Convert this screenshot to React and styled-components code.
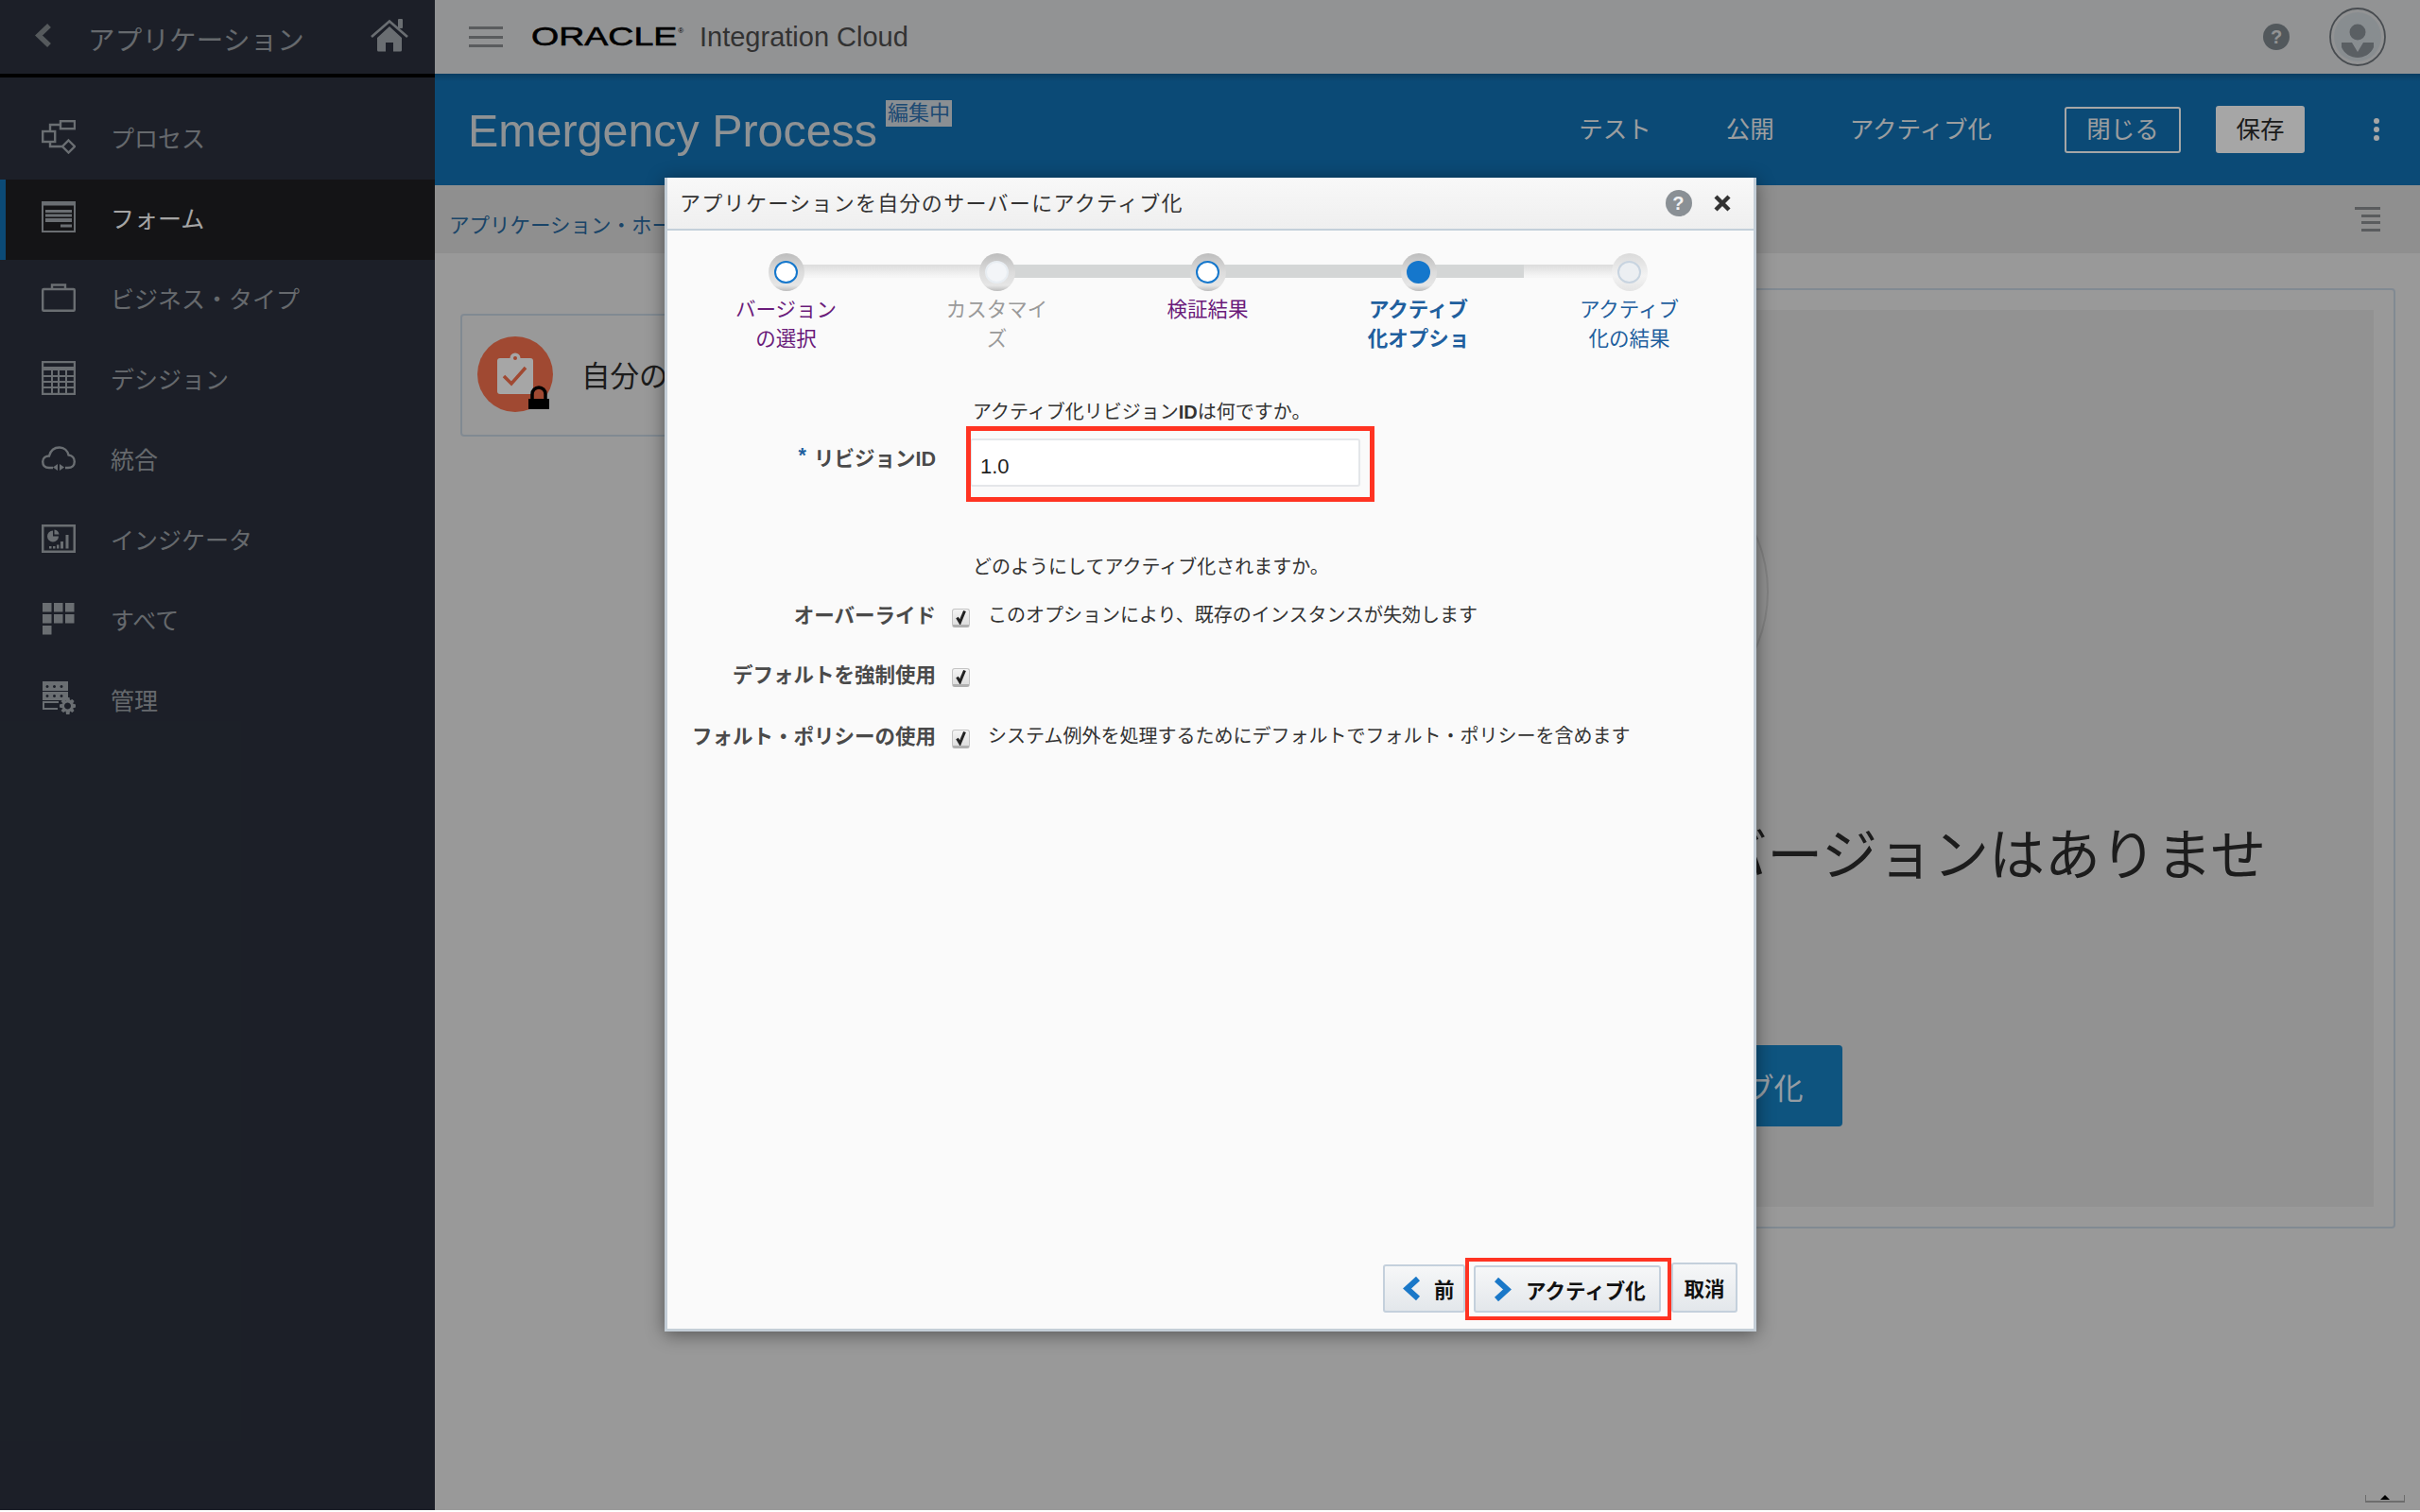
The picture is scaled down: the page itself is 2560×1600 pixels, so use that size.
import React from "react";
import styled, { createGlobalStyle } from "styled-components";

const Global = createGlobalStyle`
  html, body { margin: 0; padding: 0; background: #fff; }
  body { font-family: "Liberation Sans", "Noto Sans CJK JP", sans-serif; }
  * { box-sizing: border-box; }
`;

const Page = styled.div`
  position: relative; width: 2560px; height: 1598px; overflow: hidden;
  display: grid; grid-template-columns: 460px 1fr;
`;
const Scrim = styled.div`position: absolute; inset: 0; background: rgba(0,0,0,.35);`;

/* sidebar */
const Sidebar = styled.aside`background: #2b313e; display: flex; flex-direction: column;`;
const SideHead = styled.div`
  height: 82px; border-bottom: 4px solid #000; display: flex; align-items: center;
  padding: 0 28px 4px 37px; color: #9da2a8; font-size: 28.5px; letter-spacing: .2px;
`;
const SideTitle = styled.span`margin-left: 38px; flex: 1; padding-top: 6px;`;
const SideNav = styled.nav`padding-top: 23px; display: flex; flex-direction: column;`;
const SideItem = styled.a`
  height: 85px; display: flex; align-items: center; gap: 37px; padding: 0 0 6px 44px;
  font-size: 25px; color: ${p => (p.$active ? "#fefefe" : "#9da2a8")};
  background: ${p => (p.$active ? "#1f2022" : "transparent")};
  box-shadow: ${p => (p.$active ? "inset 6px 0 0 #1272b6" : "none")};
  svg { flex: none; color: #a3a9b0; }
`;

/* right column */
const Right = styled.div`display: flex; flex-direction: column; min-width: 0;`;
const TopBar = styled.header`
  height: 78px; background: #e1e2e4; display: flex; align-items: center; padding: 0 36px;
`;
const Hamburger = styled.div`
  width: 36px; height: 22px; display: flex; flex-direction: column; justify-content: space-between;
  i { display: block; height: 3px; background: #8a8e91; }
`;
const Logo = styled.div`
  width: 159px; margin-left: 30px; display: flex; align-items: flex-start; color: #000;
  font-size: 28px; font-weight: 400; line-height: 28px; height: 28px; white-space: nowrap;
  span { display: inline-block; transform: scaleX(1.34); transform-origin: left center; -webkit-text-stroke: .6px #000; }
  sup { font-size: 8px; line-height: 8px; margin-left: 40px; margin-top: 4px; }
`;
const Product = styled.div`font-size: 29px; color: #4e4e4e; margin-left: 19px;`;
const TopRight = styled.div`margin-left: auto; display: flex; align-items: center; gap: 42px; margin-right: 0;`;
const HelpDot = styled.span`
  width: 28px; height: 28px; border-radius: 50%; display: flex; align-items: center; justify-content: center;
  background: ${p => p.$bg}; color: ${p => p.$fg}; font-size: 20px; font-weight: 700; flex: none;
`;

const Band = styled.div`
  height: 118px; background: linear-gradient(#0f5e96 0, #1272b6 8px); display: flex; align-items: center;
  padding: 0 43px 0 35px; position: relative;
`;
const AppName = styled.h1`
  margin: 2px 0 0; font-size: 48.4px; line-height: 60px; font-weight: 400; color: #dce1e4; white-space: nowrap;
`;
const Badge = styled.span`
  align-self: flex-start; margin: 28px 0 0 9px; width: 70px; height: 28px; background: #d4dce2; color: #2e72b1;
  font-size: 22px; line-height: 28px; text-align: center; white-space: nowrap;
`;
const BandNav = styled.div`margin-left: auto; display: flex; align-items: center; font-size: 25.5px; color: #f0f3f5;`;
const BandLink = styled.a`margin-right: ${p => p.$mr}px; white-space: nowrap; padding-bottom: 5px;`;
const OutlineBtn = styled.button`
  width: 123px; height: 49px; padding: 0 0 5px; border: 2px solid #fff; border-radius: 3px; background: transparent;
  color: #f0f3f5; font: inherit; margin-right: 37px;
`;
const SaveBtn = styled.button`
  width: 94px; height: 50px; padding: 0 0 5px; border: 0; border-radius: 3px; background: #fff; color: #2b2b2b; font: inherit;
`;
const Dots = styled.div`
  margin-left: 73px; display: flex; flex-direction: column; gap: 3px;
  i { width: 6px; height: 6px; border-radius: 50%; background: #fff; display: block; }
`;

const Crumbs = styled.div`
  height: 72px; background: #dcdcdc; display: flex; align-items: center; padding: 0 42px 0 15px;
  justify-content: space-between; font-size: 21.5px; color: #2869a0;
`;
const CrumbText = styled.span`padding-top: 9px;`;
const ListIcon = styled.div`
  width: 27px; display: flex; flex-direction: column; align-items: flex-end; gap: 4.5px;
  i { height: 3px; width: 20px; background: #8a8e91; display: block; }
  i:first-child { width: 27px; }
`;

const Main = styled.main`
  flex: 1; background: #ebebeb; padding: 37px 26px 0 27px; display: grid; grid-template-columns: 400px 1fr; gap: 26px;
  position: relative; align-items: start;
`;
const Card = styled.section`
  margin-top: 27px; height: 130px; border: 2px solid #c7d4e1; border-radius: 4px;
  display: flex; align-items: center; padding-left: 16px; gap: 30px; position: relative;
  font-size: 30.5px; color: #2b2b2b; white-space: nowrap; overflow: hidden;
`;
const CardTitle = styled.span`padding-bottom: 3px;`;
const Panel = styled.section`
  height: 995px; border: 2px solid #c7d4e1; border-radius: 4px; padding: 21px;
`;
const PanelInner = styled.div`
  height: 100%; background: #e1e1e1; display: flex; flex-direction: column; align-items: center; padding-top: 148px;
`;
const Ring = styled.div`width: 300px; height: 300px; border-radius: 50%; border: 2px solid #c9c9c9; flex: none; margin-right: 6px;`;
const Empty = styled.p`
  width: 1365px; margin: 95px 0 0; font-size: 59px; line-height: 70px; text-align: center; color: #2b2b2b;
`;
const ActivateBig = styled.button`
  margin-top: 95px; width: 450px; height: 86px; border: 0; border-radius: 4px; background: #1681c4; color: #e6f2fb;
  font: inherit; font-size: 31px; flex: none; white-space: nowrap; padding: 0;
`;
const BottomTab = styled.div`
  position: absolute; right: 16px; bottom: 8px; width: 42px; height: 8px; border: 1px solid #a8a8a8; border-top: 0;
  border-bottom-width: 2px; display: flex; justify-content: center;
  &::after { content: ""; width: 0; height: 0; border: 5px solid transparent; border-bottom: 5px solid #000; border-top: 0; margin-top: 0; }
`;

/* dialog */
const Dialog = styled.div`
  position: absolute; left: 703px; top: 188px; width: 1155px; height: 1221px; background: #fafafa;
  border: solid #c4ced7; border-width: 0 3px 3px 3px; box-shadow: 0 3px 18px rgba(0,0,0,.45);
  display: flex; flex-direction: column;
`;
const DialogHead = styled.div`
  height: 56px; flex: none; border-bottom: 2px solid #c4d0da; background: linear-gradient(#f8f8f8, #efefef);
  display: flex; align-items: center; padding: 0 23px 0 13px; font-size: 22px; letter-spacing: 1.3px; color: #333;
`;
const DialogTitle = styled.span`flex: 1; white-space: nowrap; padding-bottom: 5px;`;
const Close = styled.span`margin-left: 22px; display: flex;`;

const Train = styled.div`
  position: relative; display: grid; grid-template-columns: repeat(5, 223px); padding: 24px 0 0 14px; flex: none;
`;
const Track = styled.div`
  position: absolute; left: 125px; top: 36px; width: 894px; height: 14px; display: flex;
`;
const TrackPart = styled.i`
  display: block; flex: ${p => p.$grow} 0 0;
  background: ${p => (p.$dark ? "#d4d6d6" : "linear-gradient(#dcdcdc, #f6f6f6 90%)")};
`;
const Step = styled.div`position: relative; display: flex; flex-direction: column; align-items: center;`;
const Node = styled.div`
  width: 38px; height: 40px; border-radius: 50%; display: flex; align-items: center; justify-content: center;
  background: ${p => (p.$faded ? "linear-gradient(#dadada,#f3f3f3 60%,#e4e4e4)" : "linear-gradient(#bdbdbd,#dcdcdc 50%,#e6e6e6 85%,#bcbcbc)")};
`;
const Dot = styled.div`
  width: 25px; height: 24px; border-radius: 50%; border: 2px solid ${p => p.$line}; background: ${p => p.$fill};
`;
const StepLabel = styled.div`
  margin-top: 5px; width: 112px; height: 62px; overflow: hidden; text-align: center; line-break: anywhere; word-break: break-all;
  font-size: 21.5px; line-height: 30.5px; color: ${p => p.$color}; font-weight: ${p => (p.$bold ? 700 : 400)};
`;

const Form = styled.div`
  flex: 1; display: flex; flex-direction: column; padding-top: 45px;
`;
const Row = styled.div`
  display: grid; grid-template-columns: 284px 1fr; column-gap: 17px; align-items: center; margin-top: ${p => p.$mt || 0}px;
  min-height: 28px;
`;
const Label = styled.label`
  grid-column: 1; text-align: right; font-size: 21.5px; font-weight: 700; color: #4a4a4a; white-space: nowrap;
  position: relative; top: ${p => p.$shift || 0}px;
`;
const Star = styled.span`color: #1f5f9e; margin-right: 8px; position: relative; top: -4px;`;
const Prompt = styled.div`
  grid-column: 2; padding-left: 22px; font-size: 20px; color: #333; white-space: nowrap;
  b { font-weight: 700; }
`;
const Field = styled.div`position: relative; grid-column: 2; margin-left: 19px; width: 413px;`;
const Input = styled.input`
  display: block; width: 100%; height: 51px; border: 2px solid #e4e6e9; border-radius: 3px; background: #fff;
  font: 22px "Liberation Sans", sans-serif; color: #222; padding: 8px 9px 0; outline: 0;
`;
const RedMark = styled.div`
  position: absolute; top: -13px; left: -4px; right: -15px; bottom: -16px; border: 5px solid #ff3322; pointer-events: none;
`;
const Controls = styled.div`grid-column: 2; display: flex; align-items: center; gap: 19px;`;
const Check = styled.span`
  width: 19px; height: 20px; border: 1px solid #c4c4c4; border-bottom: 3px solid #b0b0b0; border-radius: 3px;
  background: linear-gradient(#f4f4f4, #dedede); display: flex; align-items: center; justify-content: center; flex: none;
  position: relative; top: 4px;
`;
const Desc = styled.span`font-size: 20px; color: #333; white-space: nowrap;`;

const Footer = styled.div`
  flex: none; display: flex; justify-content: flex-end; align-items: flex-end; padding: 0 17px 17px 0; height: 80px; font-size: 21.5px;
`;
const FootBtn = styled.button`
  height: ${p => p.$h || 51}px; width: ${p => p.$w}px; flex: none; border: 2px solid #c4d0dc; border-radius: 3px;
  background: linear-gradient(#f6f7f8, #e3e7eb); font: inherit; font-weight: 700; color: #111; padding: 0;
  display: flex; align-items: center; justify-content: ${p => (p.$center ? "center" : "flex-start")};
  padding-left: ${p => p.$pl || 0}px; white-space: nowrap;
  svg { flex: none; margin-right: ${p => p.$gap || 0}px; }
`;
const RedWrap = styled.div`
  flex: none; width: 218px; height: 66px; border: 4px solid #ff3322; background: #fbfbfb; padding: 4px 0 0 5px; margin-bottom: -8px; position: relative;
`;

const Chevron = ({ dir }) => (
  <svg width="19" height="25" viewBox="0 0 19 25">
    <path d={dir === "l" ? "M16 2 L4.5 12.5 L16 23" : "M3 2 L14.5 12.5 L3 23"} fill="none" stroke="#1a78c8" strokeWidth="6" />
  </svg>
);

const ProcessIcon = () => (
  <svg width="36" height="36" viewBox="0 0 36 36" fill="none" stroke="currentColor" strokeWidth="2.4">
    <rect x="20" y="1.2" width="15" height="8" />
    <rect x="1.2" y="12" width="13" height="11" />
    <path d="M20 5 H9 V12 M9 23 V28 H22" />
    <path d="M28.5 21.5 L35 28 L28.5 34.5 L22 28 Z" />
  </svg>
);
const FormIcon = () => (
  <svg width="36" height="33" viewBox="0 0 36 33" fill="currentColor">
    <path fillRule="evenodd" d="M0 0H36V33H0Z M2 4.5V31H34V4.5Z" />
    <rect x="4" y="9" width="28" height="3" /><rect x="4" y="13.5" width="28" height="3" />
    <rect x="4" y="18" width="28" height="4" /><rect x="20" y="24.5" width="12" height="3" />
  </svg>
);
const CaseIcon = () => (
  <svg width="36" height="30" viewBox="0 0 36 30" fill="none" stroke="currentColor" strokeWidth="2.4">
    <rect x="1.2" y="6" width="33.6" height="22.8" rx="1" /><path d="M11 6 V1.5 H25 V6" />
  </svg>
);
const GridIcon = () => (
  <svg width="36" height="36" viewBox="0 0 36 36" fill="none" stroke="currentColor" strokeWidth="2">
    <rect x="1" y="1" width="34" height="34" strokeWidth="2.4" />
    <path d="M1 8H35" strokeWidth="4" /><path d="M1 16H35M1 22H35M1 28H35M11 8V35M18 8V35M26 8V35" />
  </svg>
);
const CloudIcon = () => (
  <svg width="36" height="26" viewBox="0 0 36 26" fill="none" stroke="currentColor" strokeWidth="2.4">
    <path d="M12 23 H8 C3 23 1.2 20 1.2 16.5 C1.2 12.5 4.5 10.5 8 10.5 C9.5 4.5 14 1.5 19 1.5 C24 1.5 27.5 5 28.5 9.5 C32.5 10 34.8 13 34.8 16.5 C34.8 20.5 32 23 28 23 H25" />
    <path d="M17 19V26L12 22.5Z M19 19V26L24 22.5Z" fill="currentColor" stroke="none" />
  </svg>
);
const GaugeIcon = () => (
  <svg width="36" height="30" viewBox="0 0 36 30" fill="currentColor">
    <path fillRule="evenodd" d="M0 0H36V30H0Z M2.5 2.5V27.5H33.5V2.5Z" />
    <path d="M12 6.5 A6 6 0 1 0 18 12.5 H12Z" /><path d="M13.5 5.5 A6 6 0 0 1 18.5 10.5 H13.5Z" />
    <rect x="8" y="23" width="2.5" height="2.5" /><rect x="12" y="23" width="2.5" height="2.5" />
    <rect x="16" y="21.5" width="2.5" height="4" /><rect x="20" y="18" width="3" height="7.5" /><rect x="25.5" y="11" width="3" height="14.5" />
  </svg>
);
const AllIcon = () => (
  <svg width="36" height="34" viewBox="0 0 36 34" fill="currentColor">
    {[[1,0],[13,0],[25,0],[1,12],[13,12],[25,12],[1,24]].map(([x, y]) => <rect key={`${x}-${y}`} x={x} y={y} width="9.5" height="9.5" />)}
  </svg>
);
const AdminIcon = () => (
  <svg width="36" height="37" viewBox="0 0 36 37" fill="currentColor">
    <path fillRule="evenodd" d="M1 0H28V10H1Z M6 4a1.5 1.5 0 1 0 .01 0Z M13.5 4a1.5 1.5 0 1 0 .01 0Z M21 4a1.5 1.5 0 1 0 .01 0Z" />
    <path fillRule="evenodd" d="M1 11H28V20H1Z M6 14a1.5 1.5 0 1 0 .01 0Z M13.5 14a1.5 1.5 0 1 0 .01 0Z M21 14a1.5 1.5 0 1 0 .01 0Z" />
    <path d="M1 21H18V23H3V28H17V30H1Z" />
    <path fillRule="evenodd" d="M27 17L29.5 17L30 20L32.5 19L34.5 21L33 23.5L36 24.5V27.5L33 28.5L34.5 31L32.5 33L30 31.5L29.5 35H26L25.5 31.5L23 33L20.5 31L22.5 28.5L19 27.5V24.5L22.5 23.5L20.5 21L23 19L25.5 20.5Z M27.5 22.5a3.5 3.5 0 1 0 .01 0Z" />
  </svg>
);
const HomeIcon = () => (
  <svg width="40" height="35" viewBox="0 0 40 35" fill="none">
    <path d="M7 20 L20 8 L33 20 V33 a1.5 1.5 0 0 1-1.5 1.5 H24 V25 H16 V34.5 H8.5 A1.5 1.5 0 0 1 7 33Z" fill="#a3a9b0" />
    <path d="M1 19 L20 2.5 L39 19" stroke="#a3a9b0" strokeWidth="2.6" />
    <rect x="29" y="0" width="5" height="10" rx="1" fill="#a3a9b0" />
  </svg>
);
const BackIcon = () => (
  <svg width="18" height="25" viewBox="0 0 18 25"><path d="M15 2 L4 12.5 L15 23" fill="none" stroke="#83898e" strokeWidth="5.5" /></svg>
);
const Avatar = () => (
  <svg width="60" height="62" viewBox="0 0 60 62">
    <ellipse cx="30" cy="31" rx="29" ry="30" fill="none" stroke="#6f767c" strokeWidth="1.8" />
    <ellipse cx="30" cy="31" rx="25" ry="26" fill="#d2d9de" />
    <circle cx="30" cy="26" r="8.5" fill="#8b9299" />
    <path d="M13 37 H24 L30 47 L36 37 H47 V42 C44 49 37 53 30 53 C23 53 16 49 13 42Z" fill="#8b9299" />
  </svg>
);
const TaskBadge = () => (
  <svg width="80" height="90" viewBox="0 0 80 90" style={{ flex: "none", marginTop: 8 }}>
    <circle cx="40" cy="40" r="40" fill="#f6704d" />
    <rect x="21" y="23" width="38" height="38" rx="3" fill="#fff" />
    <circle cx="40" cy="23" r="5.5" fill="#fff" /><circle cx="40" cy="23" r="2" fill="#f6704d" />
    <path d="M28 42 L36 50 L51 33" fill="none" stroke="#f6704d" strokeWidth="3.5" />
    <rect x="54" y="66" width="22" height="11" fill="#000" />
    <path d="M58 66 V61 a7 7 0 0 1 14 0 V66" fill="none" stroke="#000" strokeWidth="3.5" />
  </svg>
);
const CheckMark = () => (
  <svg width="13" height="16" viewBox="0 0 13 16"><path d="M2.5 8.5 L5.5 13.5 L10.5 1.5" fill="none" stroke="#222" strokeWidth="3" /></svg>
);

const navItems = [
  ["プロセス", <ProcessIcon />], ["フォーム", <FormIcon />, true], ["ビジネス・タイプ", <CaseIcon />], ["デシジョン", <GridIcon />],
  ["統合", <CloudIcon />], ["インジケータ", <GaugeIcon />], ["すべて", <AllIcon />], ["管理", <AdminIcon />],
];
const PURPLE = "#6a1b7a", BLUE = "#1f5f9e";
const steps = [
  { t: "バージョンの選択", c: PURPLE, line: "#1577cc", fill: "#fff" },
  { t: "カスタマイズ", c: "#9a9a9a", line: "#e8edf2", fill: "#f3f5f8" },
  { t: "検証結果", c: PURPLE, line: "#1577cc", fill: "#fff" },
  { t: "アクティブ化オプション", c: BLUE, bold: true, line: "#1577cc", fill: "#1577cc" },
  { t: "アクティブ化の結果", c: BLUE, line: "#c8d4e0", fill: "#eceff2", faded: true },
];

export default function App() {
  return (
    <Page>
      <Global />
      <Sidebar>
        <SideHead><BackIcon /><SideTitle>アプリケーション</SideTitle><HomeIcon /></SideHead>
        <SideNav>
          {navItems.map(([t, ic, a]) => <SideItem key={t} $active={a}>{ic}<span>{t}</span></SideItem>)}
        </SideNav>
      </Sidebar>
      <Right>
        <TopBar>
          <Hamburger><i /><i /><i /></Hamburger>
          <Logo><span>ORACLE</span><sup>®</sup></Logo>
          <Product>Integration Cloud</Product>
          <TopRight>
            <HelpDot $bg="#7f888e" $fg="#e1e2e4">?</HelpDot>
            <Avatar />
          </TopRight>
        </TopBar>
        <Band>
          <AppName>Emergency Process</AppName>
          <Badge>編集中</Badge>
          <BandNav>
            <BandLink $mr={79}>テスト</BandLink>
            <BandLink $mr={80}>公開</BandLink>
            <BandLink $mr={77}>アクティブ化</BandLink>
            <OutlineBtn>閉じる</OutlineBtn>
            <SaveBtn>保存</SaveBtn>
            <Dots><i /><i /><i /></Dots>
          </BandNav>
        </Band>
        <Crumbs>
          <CrumbText>アプリケーション・ホーム</CrumbText>
          <ListIcon><i /><i /><i /><i /></ListIcon>
        </Crumbs>
        <Main>
          <Card><TaskBadge /><CardTitle>自分のタスク</CardTitle></Card>
          <Panel>
            <PanelInner>
              <Ring />
              <Empty>アクティブ化したプロセス・バージョンはありません</Empty>
              <ActivateBig>バージョンをアクティブ化</ActivateBig>
            </PanelInner>
          </Panel>
          <BottomTab />
        </Main>
      </Right>
      <Scrim />
      <Dialog>
        <DialogHead>
          <DialogTitle>アプリケーションを自分のサーバーにアクティブ化</DialogTitle>
          <HelpDot $bg="#8a9095" $fg="#f2f2f2">?</HelpDot>
          <Close>
            <svg width="20" height="20" viewBox="0 0 20 20"><path d="M3 3 L17 17 M17 3 L3 17" stroke="#333" strokeWidth="4.4" /></svg>
          </Close>
        </DialogHead>
        <Train>
          <Track>
            <TrackPart $grow={222} /><TrackPart $grow={559} $dark /><TrackPart $grow={113} />
          </Track>
          {steps.map(s => (
            <Step key={s.t}>
              <Node $faded={s.faded}><Dot $line={s.line} $fill={s.fill} /></Node>
              <StepLabel $color={s.c} $bold={s.bold}>{s.t}</StepLabel>
            </Step>
          ))}
        </Train>
        <Form>
          <Row><Prompt>アクティブ化リビジョン<b>ID</b>は何ですか。</Prompt></Row>
          <Row $mt={15}>
            <Label $shift={-6}><Star>*</Star>リビジョンID</Label>
            <Field><Input defaultValue="1.0" /><RedMark /></Field>
          </Row>
          <Row $mt={69}><Prompt>どのようにしてアクティブ化されますか。</Prompt></Row>
          <Row $mt={21}>
            <Label>オーバーライド</Label>
            <Controls><Check><CheckMark /></Check><Desc>このオプションにより、既存のインスタンスが失効します</Desc></Controls>
          </Row>
          <Row $mt={32}>
            <Label>デフォルトを強制使用</Label>
            <Controls><Check><CheckMark /></Check></Controls>
          </Row>
          <Row $mt={34}>
            <Label>フォルト・ポリシーの使用</Label>
            <Controls><Check><CheckMark /></Check><Desc>システム例外を処理するためにデフォルトでフォルト・ポリシーを含めます</Desc></Controls>
          </Row>
        </Form>
        <Footer>
          <FootBtn $w={87} $pl={19} $gap={14}><Chevron dir="l" />前</FootBtn>
          <RedWrap>
            <FootBtn $w={198} $h={50} $pl={19} $gap={15}><Chevron dir="r" />アクティブ化</FootBtn>
          </RedWrap>
          <FootBtn $w={70} $h={53} $center>取消</FootBtn>
        </Footer>
      </Dialog>
    </Page>
  );
}
